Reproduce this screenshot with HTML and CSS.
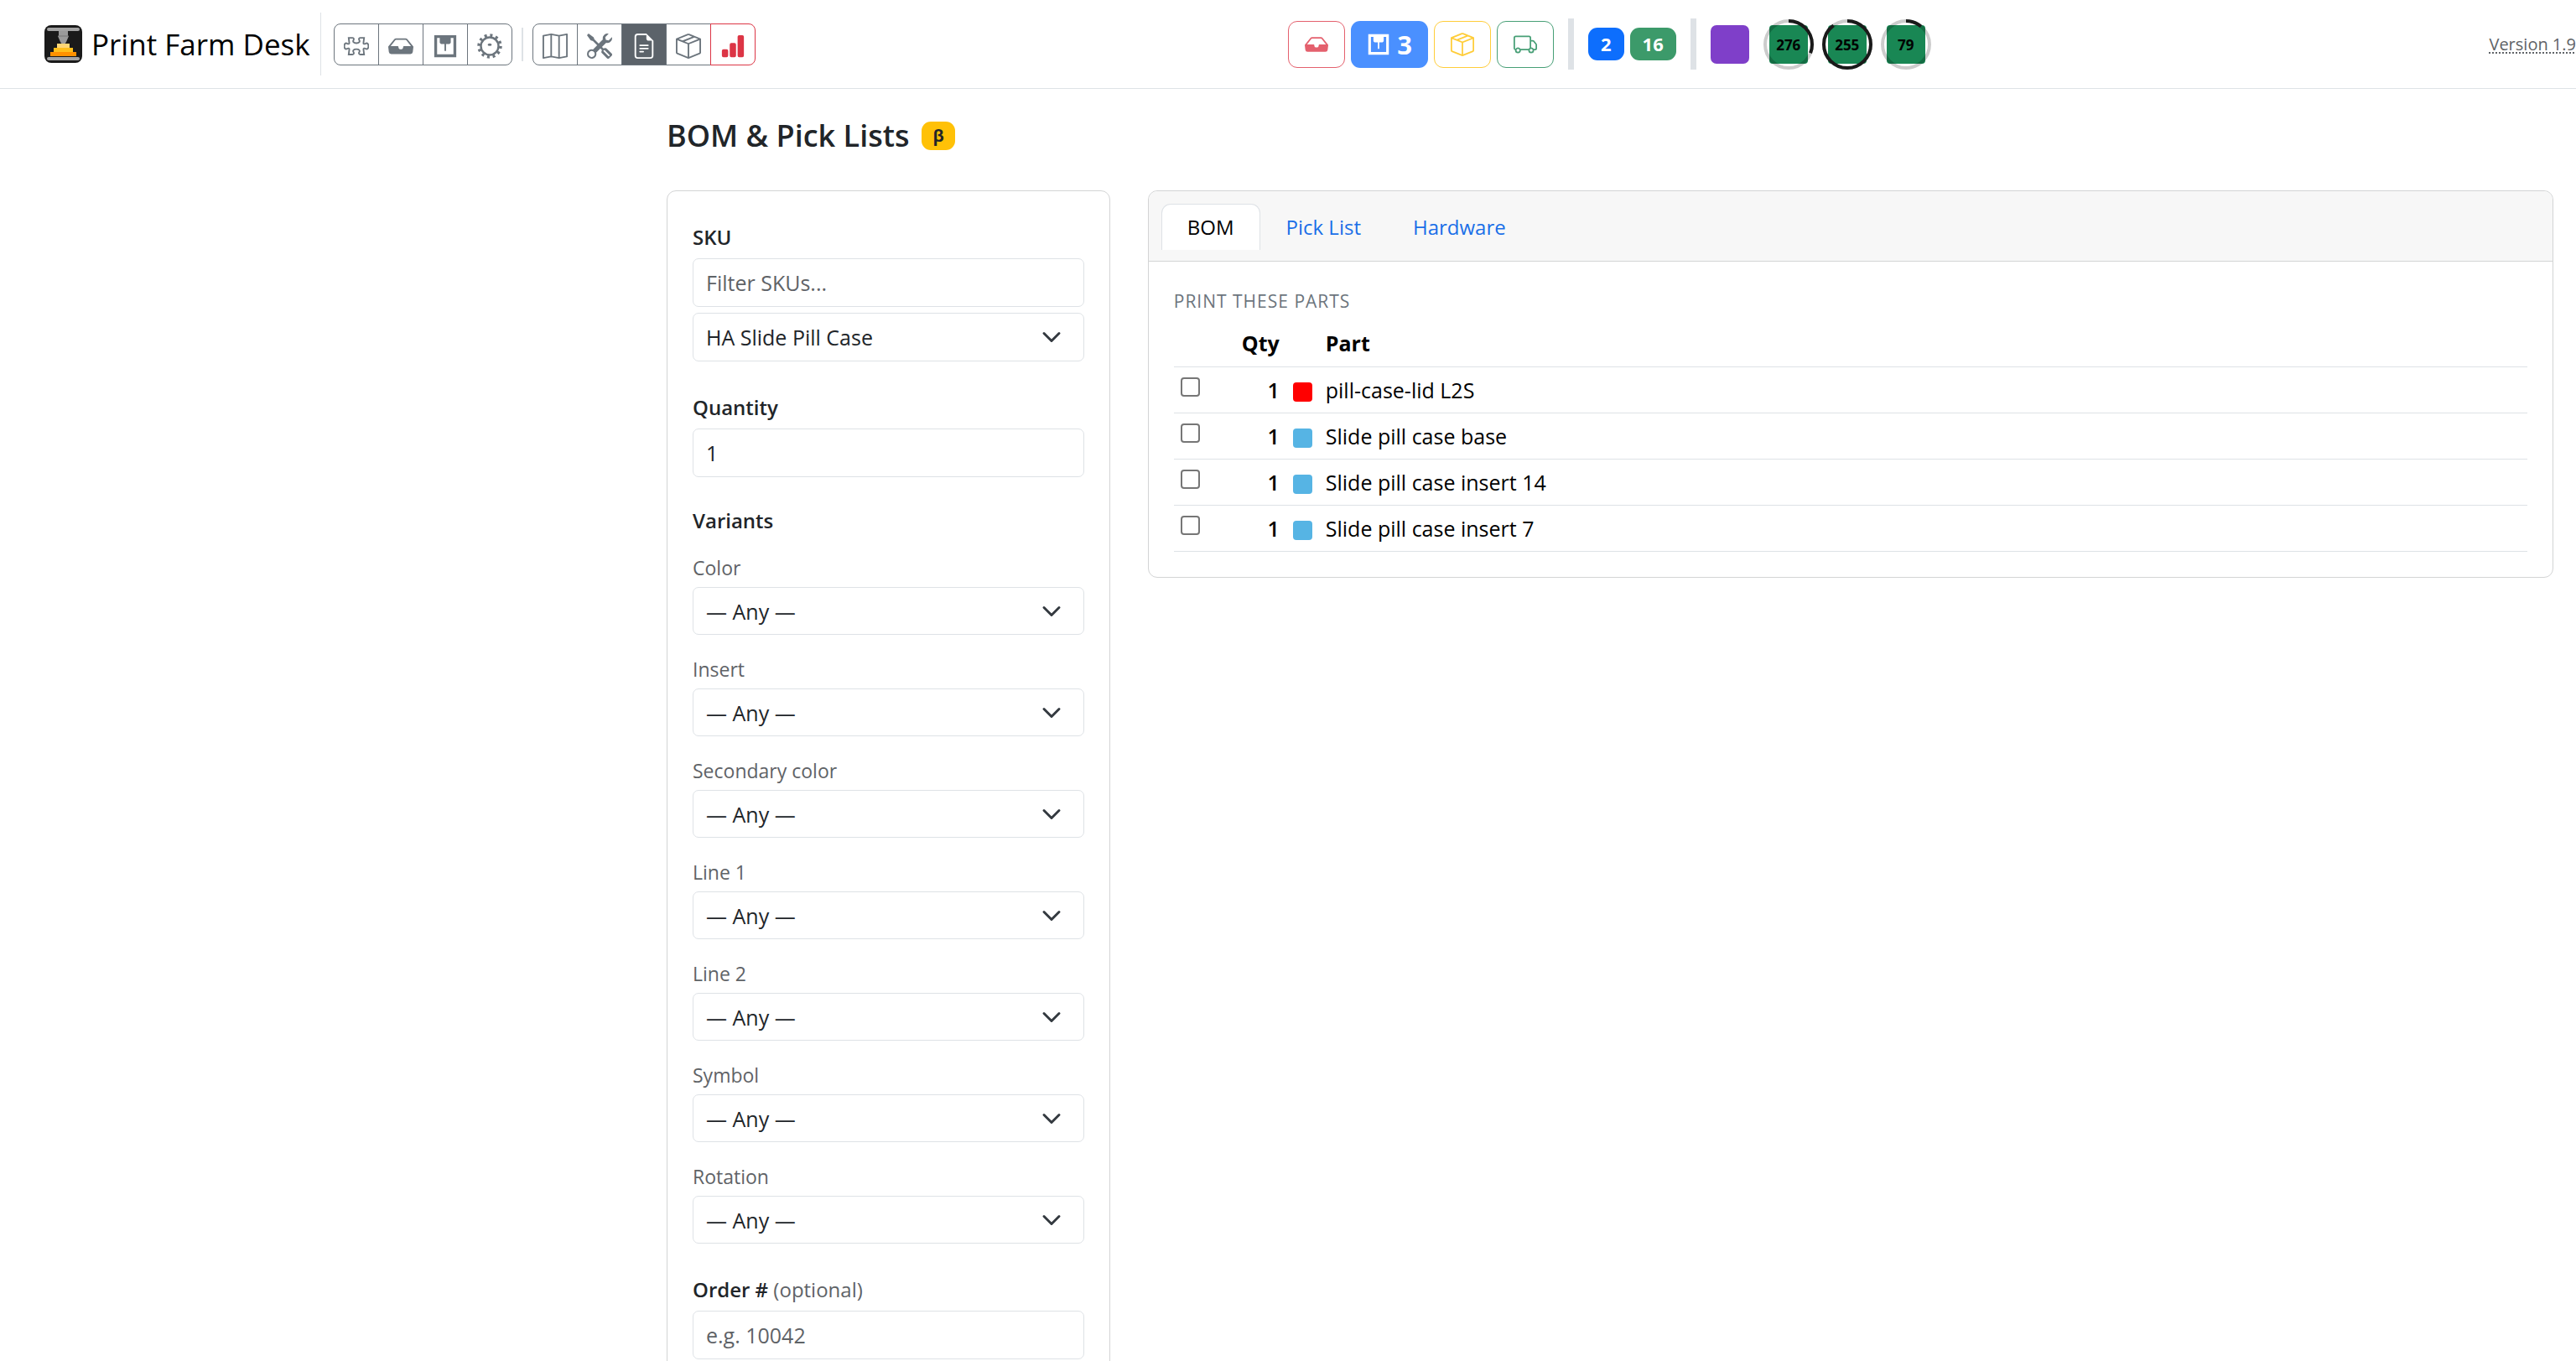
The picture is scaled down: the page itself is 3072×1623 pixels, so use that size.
FILE: index.html
```
<!DOCTYPE html>
<html lang="en">
<head>
  <meta charset="UTF-8">
  <meta name="viewport" content="width=device-width, initial-scale=1.0">
  <title>Print Farm Desk</title>
  <link rel="stylesheet" href="styles.css">
</head>
<body>

  <svg class="sprite" aria-hidden="true">
    <symbol id="i-puzzle" viewBox="0 0 16 16"><path d="M3.1 2.7h2.3c.9 0 1.2.7.8 1.4-.7 1.2.2 2 1.8 2s2.5-.8 1.8-2c-.4-.7-.1-1.4.8-1.4h2.3l-.4 3.2c-.1.7.7.9 1.3.5 1.1-.7 1.900.2 1.900 1.600s-.8 2.300-1.900 1.600c-.6-.4-1.400-.2-1.300.5l.4 3.200h-2.300c-.9 0-1.200-.7-.8-1.400.7-1.200-.2-2-1.800-2s-2.500.8-1.800 2c.4.7.1 1.400-.8 1.400H3.100l.4-3.200c.1-.7-.7-.9-1.300-.5-1.100.7-1.900-.2-1.900-1.600s.8-2.300 1.900-1.600c.6.4 1.400.2 1.300-.5z" fill="none" stroke="currentColor"/></symbol>
    <symbol id="i-inbox" viewBox="0 0 16 16"><path fill="currentColor" d="M4.98 4a.5.5 0 0 0-.39.188L1.54 8H6a.5.5 0 0 1 .5.5 1.5 1.5 0 1 0 3 0A.5.5 0 0 1 10 8h4.46l-3.05-3.812A.5.5 0 0 0 11.02 4zm-1.17-.437A1.5 1.5 0 0 1 4.98 3h6.04a1.5 1.5 0 0 1 1.17.563l3.7 4.625a.5.5 0 0 1 .106.374l-.39 3.124A1.5 1.5 0 0 1 14.117 13H1.883a1.5 1.5 0 0 1-1.489-1.314l-.39-3.124a.5.5 0 0 1 .106-.374z"/></symbol>
    <symbol id="i-printer" viewBox="0 0 16 16"><path fill="currentColor" fill-rule="evenodd" d="M1 1h14v14H1zM2.8 2.8v10.4h10.4V2.8h-1.7v3L10.7 6.600H8.500v4.400h-1V6.600H5.300l-.8-.8v-3z"/></symbol>
    <symbol id="i-gear" viewBox="0 0 16 16"><circle cx="8" cy="8" r="5.6" fill="none" stroke="currentColor" stroke-width="1.3"/><circle cx="8" cy="8" r="6.9" fill="none" stroke="currentColor" stroke-width="1.9" stroke-dasharray="1.6 2.013"/><ellipse cx="8" cy="7" rx="1.3" ry=".8" fill="currentColor"/></symbol>
    <symbol id="i-map" viewBox="0 0 16 16"><path d="M.5 1.4 5.5.5l5 .9 5-.9v14.1l-5 .9-5-.9-5 .9zM5.5.5v14.1M10.5 1.4v14.1" fill="none" stroke="currentColor" stroke-linejoin="round"/></symbol>
    <symbol id="i-tools" viewBox="0 0 16 16"><path fill="currentColor" d="M1 0 0 1l2.2 3.081a1 1 0 0 0 .815.419h.07a1 1 0 0 1 .708.293l2.675 2.675-2.617 2.654A3.003 3.003 0 0 0 0 13a3 3 0 1 0 5.878-.851l2.654-2.617.968.968-.305.914a1 1 0 0 0 .242 1.023l3.27 3.27a.997.997 0 0 0 1.414 0l1.586-1.586a.997.997 0 0 0 0-1.414l-3.27-3.27a1 1 0 0 0-1.023-.242L10.5 9.5l-.96-.96 2.68-2.643A3.005 3.005 0 0 0 16 3q0-.405-.102-.777l-2.14 2.141L12 4l-.364-1.757L13.777.102a3 3 0 0 0-3.675 3.68L7.462 6.46 4.793 3.793a1 1 0 0 1-.293-.707v-.071a1 1 0 0 0-.419-.814zm9.646 10.646a.5.5 0 0 1 .708 0l2.914 2.915a.5.5 0 0 1-.707.707l-2.915-2.914a.5.5 0 0 1 0-.708M3 11l.471.242.529.026.287.445.445.287.026.529L5 13l-.242.471-.026.529-.445.287-.287.445-.529.026L3 15l-.471-.242L2 14.732l-.287-.445L1.268 14l-.026-.529L1 13l.242-.471.026-.529.445-.287.287-.445.529-.026z"/></symbol>
    <symbol id="i-file" viewBox="0 0 16 16"><path fill="currentColor" d="M5.5 7a.5.5 0 0 0 0 1h5a.5.5 0 0 0 0-1zM5 9.5a.5.5 0 0 1 .5-.5h5a.5.5 0 0 1 0 1h-5a.5.5 0 0 1-.5-.5m0 2a.5.5 0 0 1 .5-.5h2a.5.5 0 0 1 0 1h-2a.5.5 0 0 1-.5-.5"/><path fill="currentColor" d="M9.5 0H4a2 2 0 0 0-2 2v12a2 2 0 0 0 2 2h8a2 2 0 0 0 2-2V4.5zm0 1v2A1.5 1.5 0 0 0 11 4.5h2V14a1 1 0 0 1-1 1H4a1 1 0 0 1-1-1V2a1 1 0 0 1 1-1z"/></symbol>
    <symbol id="i-box" viewBox="0 0 16 16"><path fill="currentColor" d="M8.186 1.113a.5.5 0 0 0-.372 0L1.846 3.5l2.404.961L10.404 2zm3.564 1.426L5.596 5 8 5.961 14.154 3.5zm3.25 1.7-6.5 2.6v7.922l6.5-2.6V4.24zM7.5 14.762V6.838L1 4.239v7.923zM7.443.184a1.5 1.5 0 0 1 1.114 0l7.129 2.852A.5.5 0 0 1 16 3.5v8.662a1 1 0 0 1-.629.928l-7.185 2.874a.5.5 0 0 1-.372 0L.63 13.09a1 1 0 0 1-.63-.928V3.5a.5.5 0 0 1 .314-.464z"/></symbol>
    <symbol id="i-chart" viewBox="0 0 16 16"><path fill="currentColor" d="M1 11a1 1 0 0 1 1-1h2a1 1 0 0 1 1 1v3a1 1 0 0 1-1 1H2a1 1 0 0 1-1-1zm5-4a1 1 0 0 1 1-1h2a1 1 0 0 1 1 1v7a1 1 0 0 1-1 1H7a1 1 0 0 1-1-1zm5-5a1 1 0 0 1 1-1h2a1 1 0 0 1 1 1v12a1 1 0 0 1-1 1h-2a1 1 0 0 1-1-1z"/></symbol>
    <symbol id="i-truck" viewBox="0 0 16 16"><path fill="currentColor" d="M0 3.5A1.5 1.5 0 0 1 1.5 2h9A1.5 1.5 0 0 1 12 3.5V5h1.02a1.5 1.5 0 0 1 1.17.563l1.481 1.85a1.5 1.5 0 0 1 .329.938V10.5a1.5 1.5 0 0 1-1.5 1.5H14a2 2 0 1 1-4 0H5a2 2 0 1 1-3.998-.085A1.5 1.5 0 0 1 0 10.5zm1.294 7.456A2 2 0 0 1 4.732 11h5.536a2 2 0 0 1 .732-.732V3.5a.5.5 0 0 0-.5-.5h-9a.5.5 0 0 0-.5.5v7a.5.5 0 0 0 .294.456M12 10a2 2 0 0 1 1.732 1h.768a.5.5 0 0 0 .5-.5V8.35a.5.5 0 0 0-.11-.312l-1.48-1.85A.5.5 0 0 0 13.02 6H12zm-9 1a1 1 0 1 0 0 2 1 1 0 0 0 0-2m9 0a1 1 0 1 0 0 2 1 1 0 0 0 0-2"/></symbol>
    <symbol id="i-chevron" viewBox="0 0 16 16"><path d="m2 5 6 6 6-6" fill="none" stroke="#343a40" stroke-width="2" stroke-linecap="round" stroke-linejoin="round"/></symbol>
  </svg>

  <header class="navbar">
    <div class="nav-left">
      <a class="brand" href="#">
        <svg class="logo" viewBox="0 0 45 45" aria-hidden="true">
          <rect width="45" height="45" rx="8" fill="#1a1a1a"/>
          <rect x="3" y="3" width="39" height="4" rx="2" fill="#a3a3a3"/>
          <path d="M17 7h11v6h1l-3 7-2 3h-3l-2-3-3-7h1z" fill="#9a9a9a"/>
          <path d="M16 13h13" stroke="#777"/>
          <rect x="15" y="22" width="15" height="5" fill="#ffd676"/>
          <rect x="11" y="27" width="23" height="5" fill="#ffbf1c"/>
          <rect x="7" y="32" width="31" height="5" fill="#ff9100"/>
          <rect x="3" y="38" width="39" height="4" rx="2" fill="#a3a3a3"/>
        </svg>
        Print Farm Desk
      </a>
      <div class="brand-line"></div>
      <nav class="btn-group">
        <button class="btn" aria-label="Parts"><svg><use href="#i-puzzle"/></svg></button>
        <button class="btn" aria-label="Inbox"><svg><use href="#i-inbox"/></svg></button>
        <button class="btn" aria-label="Printers"><svg><use href="#i-printer"/></svg></button>
        <button class="btn" aria-label="Settings"><svg><use href="#i-gear"/></svg></button>
      </nav>
      <div class="group-line"></div>
      <nav class="btn-group">
        <button class="btn" aria-label="Map"><svg><use href="#i-map"/></svg></button>
        <button class="btn" aria-label="Tools"><svg><use href="#i-tools"/></svg></button>
        <button class="btn active" aria-label="BOM"><svg><use href="#i-file"/></svg></button>
        <button class="btn" aria-label="Stock"><svg><use href="#i-box"/></svg></button>
        <button class="btn danger" aria-label="Stats"><svg><use href="#i-chart"/></svg></button>
      </nav>
    </div>

    <div class="nav-right">
      <div class="status">
        <div class="queue">
          <button class="stage red" aria-label="Incoming"><svg><use href="#i-inbox"/></svg></button>
          <button class="stage blue" aria-label="Printing"><svg><use href="#i-printer"/></svg>3</button>
          <button class="stage yellow" aria-label="Packing"><svg><use href="#i-box"/></svg></button>
          <button class="stage green" aria-label="Shipping"><svg><use href="#i-truck"/></svg></button>
        </div>
        <div class="bar"></div>
        <div class="counts">
          <span class="count blue">2</span>
          <span class="count green">16</span>
        </div>
        <div class="bar"></div>
        <div class="printers">
          <span class="printer idle"></span>
          <span class="printer">276
            <svg class="ring" viewBox="0 0 60 60"><circle cx="30" cy="30" r="28"/><circle class="done" cx="30" cy="30" r="28" pathLength="100" stroke-dasharray="31 100"/></svg>
          </span>
          <span class="printer">255
            <svg class="ring" viewBox="0 0 60 60"><circle cx="30" cy="30" r="28"/><circle class="done" cx="30" cy="30" r="28" pathLength="100" stroke-dasharray="90 100"/></svg>
          </span>
          <span class="printer">79
            <svg class="ring" viewBox="0 0 60 60"><circle cx="30" cy="30" r="28"/><circle class="done" cx="30" cy="30" r="28" pathLength="100" stroke-dasharray="11 100"/></svg>
          </span>
        </div>
      </div>
      <a class="version" href="#">Version 1.9</a>
    </div>
  </header>

  <main class="container">
    <h1>BOM &amp; Pick Lists <span class="beta">β</span></h1>

    <div class="row">
      <form class="card filters">
        <div class="group">
          <label class="title" for="sku">SKU</label>
          <input type="text" placeholder="Filter SKUs..." aria-label="Filter SKUs">
          <div class="select">
            <select id="sku"><option>HA Slide Pill Case</option></select>
            <svg><use href="#i-chevron"/></svg>
          </div>
        </div>

        <div class="group">
          <label class="title" for="qty">Quantity</label>
          <input type="text" inputmode="numeric" id="qty" value="1">
        </div>

        <div class="variants">
          <h2 class="title">Variants</h2>
          <div class="variant">
            <label for="color">Color</label>
            <div class="select"><select id="color"><option>— Any —</option></select><svg><use href="#i-chevron"/></svg></div>
          </div>
          <div class="variant">
            <label for="insert">Insert</label>
            <div class="select"><select id="insert"><option>— Any —</option></select><svg><use href="#i-chevron"/></svg></div>
          </div>
          <div class="variant">
            <label for="color2">Secondary color</label>
            <div class="select"><select id="color2"><option>— Any —</option></select><svg><use href="#i-chevron"/></svg></div>
          </div>
          <div class="variant">
            <label for="line1">Line 1</label>
            <div class="select"><select id="line1"><option>— Any —</option></select><svg><use href="#i-chevron"/></svg></div>
          </div>
          <div class="variant">
            <label for="line2">Line 2</label>
            <div class="select"><select id="line2"><option>— Any —</option></select><svg><use href="#i-chevron"/></svg></div>
          </div>
          <div class="variant">
            <label for="symbol">Symbol</label>
            <div class="select"><select id="symbol"><option>— Any —</option></select><svg><use href="#i-chevron"/></svg></div>
          </div>
          <div class="variant">
            <label for="rotation">Rotation</label>
            <div class="select"><select id="rotation"><option>— Any —</option></select><svg><use href="#i-chevron"/></svg></div>
          </div>
        </div>

        <div class="group">
          <label class="title" for="order">Order # <span>(optional)</span></label>
          <input type="text" id="order" placeholder="e.g. 10042">
        </div>
      </form>

      <section class="card results">
        <div class="tabs">
          <a class="tab active" href="#">BOM</a>
          <a class="tab" href="#">Pick List</a>
          <a class="tab" href="#">Hardware</a>
        </div>
        <div class="card-body">
          <h3>Print these parts</h3>
          <table>
            <thead>
              <tr><th class="check"></th><th class="qty">Qty</th><th class="swatch"></th><th>Part</th></tr>
            </thead>
            <tbody>
              <tr>
                <td class="check"><input type="checkbox" id="p1"></td>
                <td class="qty">1</td>
                <td class="swatch"><span class="red"></span></td>
                <td><label for="p1">pill-case-lid L2S</label></td>
              </tr>
              <tr>
                <td class="check"><input type="checkbox" id="p2"></td>
                <td class="qty">1</td>
                <td class="swatch"><span></span></td>
                <td><label for="p2">Slide pill case base</label></td>
              </tr>
              <tr>
                <td class="check"><input type="checkbox" id="p3"></td>
                <td class="qty">1</td>
                <td class="swatch"><span></span></td>
                <td><label for="p3">Slide pill case insert 14</label></td>
              </tr>
              <tr>
                <td class="check"><input type="checkbox" id="p4"></td>
                <td class="qty">1</td>
                <td class="swatch"><span></span></td>
                <td><label for="p4">Slide pill case insert 7</label></td>
              </tr>
            </tbody>
          </table>
        </div>
      </section>
    </div>
  </main>

</body>
</html>
```
FILE: styles.css
```
:root {
  --text: #212529;
  --muted: #6c757d;
  --label: #5f6367;
  --line: #dee2e6;
  --card-line: #d3d4d5;
  --blue: #0d6efd;
  --green: #198754;
  --red: #dc3545;
  --yellow: #ffc107;
}

* {
  box-sizing: border-box;
}

body {
  margin: 0;
  height: 100vh;
  overflow: hidden;
  font-family: "Open Sans", "Noto Sans", sans-serif;
  font-size: 25px;
  line-height: 40px;
  color: var(--text);
  background: #fff;
}

button,
input,
select {
  font: inherit;
  color: inherit;
}

.sprite {
  display: none;
}

/* Navbar */
.navbar {
  display: grid;
  grid-template-columns: 1fr 1fr;
  height: 106px;
  border-bottom: 1px solid var(--line);
}

.nav-left {
  display: flex;
  align-items: center;
  padding-left: 53px;
}

.brand {
  display: flex;
  align-items: center;
  gap: 11px;
  margin-right: 12px;
  font-size: 35px;
  color: #000;
  text-decoration: none;
  white-space: nowrap;
}

.logo {
  width: 45px;
  height: 45px;
}

.brand-line {
  width: 1px;
  height: 75px;
  margin-right: 15px;
  background: var(--line);
}

.group-line {
  width: 2px;
  height: 40px;
  margin: 0 11px;
  background: var(--line);
}

.btn-group {
  display: flex;
}

.btn {
  display: flex;
  align-items: center;
  justify-content: center;
  width: 54px;
  height: 50px;
  margin-left: -1px;
  padding: 4px 0 0;
  border: 1px solid var(--muted);
  background: #fff;
  color: var(--muted);
  cursor: pointer;
}

.btn:first-child {
  margin-left: 0;
  border-radius: 8px 0 0 8px;
}

.btn:last-child {
  border-radius: 0 8px 8px 0;
}

.btn.active {
  background: #5c636a;
  color: #fff;
}

.btn.danger {
  border-color: var(--red);
  color: var(--red);
}

.btn svg {
  width: 30px;
  height: 30px;
}

.nav-right {
  display: flex;
  align-items: center;
  justify-content: space-between;
  overflow: hidden;
}

.status,
.queue,
.counts,
.printers {
  display: flex;
  align-items: center;
}

.queue {
  gap: 7px;
}

.stage {
  display: flex;
  align-items: center;
  justify-content: center;
  gap: 8px;
  width: 68px;
  height: 56px;
  padding: 0;
  border: 1px solid;
  border-radius: 11px;
  background: #fff;
  cursor: pointer;
}

.stage svg {
  width: 28px;
  height: 28px;
}

.stage.red {
  color: #e4606d;
}

.stage.blue {
  width: 92px;
  border: 0;
  background: #4a90ff;
  color: #fff;
  font-size: 31px;
  font-weight: 700;
}

.stage.yellow {
  color: #ffcd39;
}

.stage.green {
  color: #479f76;
}

.bar {
  width: 7px;
  height: 61px;
  margin: 0 17px;
  background: var(--line);
}

.counts {
  gap: 7px;
}

.count {
  padding: 0 15px;
  border-radius: 11px;
  background: var(--blue);
  color: #fff;
  font-size: 22px;
  font-weight: 700;
  line-height: 39px;
}

.count.green {
  background: #3c9a6a;
}

.printers {
  gap: 24px;
}

.printer {
  position: relative;
  width: 46px;
  height: 46px;
  border-radius: 4px;
  background: var(--green);
  color: #000;
  font-size: 17px;
  font-weight: 700;
  line-height: 48px;
  text-align: center;
}

.printer.idle {
  border-radius: 7px;
  background: #7f3fc9;
}

.ring {
  position: absolute;
  inset: -7px;
  width: 60px;
  height: 60px;
  transform: rotate(-90deg);
}

.ring circle {
  fill: none;
  stroke: rgba(0, 0, 0, 0.2);
  stroke-width: 4;
}

.ring .done {
  stroke: #1a1a1a;
}

.version {
  color: var(--label);
  font-size: 20px;
  text-decoration: underline dotted 2px;
  text-underline-offset: 3px;
  white-space: nowrap;
}

/* Page */
.container {
  max-width: 2250px;
  margin: 0 27px 0 auto;
  padding-top: 32px;
}

h1 {
  display: flex;
  align-items: center;
  gap: 15px;
  margin: 0 0 41px;
  font-size: 36px;
  font-weight: 600;
  line-height: 48px;
}

.beta {
  padding: 0 13px;
  border-radius: 11px;
  background: var(--yellow);
  font-size: 20px;
  font-weight: 700;
  line-height: 34px;
}

.row {
  display: grid;
  grid-template-columns: repeat(12, 1fr);
  gap: 45px;
  align-items: start;
}

.card {
  border: 1px solid var(--card-line);
  border-radius: 11px;
  background: #fff;
}

/* Filters */
.filters {
  grid-column: span 3;
  padding: 30px;
}

.group {
  margin-bottom: 30px;
}

.title {
  display: block;
  margin: 0;
  font-size: 24px;
  font-weight: 600;
  line-height: 50px;
}

.title span {
  color: var(--label);
  font-weight: 400;
}

input[type="text"],
select {
  display: block;
  width: 100%;
  height: 58px;
  padding: 0 15px;
  border: 1px solid var(--line);
  border-radius: 7px;
  background: #fff;
  appearance: none;
}

input::placeholder {
  color: var(--label);
  opacity: 1;
}

.select {
  position: relative;
}

input + .select {
  margin-top: 7px;
}

.select svg {
  position: absolute;
  top: 17px;
  right: 27px;
  width: 24px;
  height: 24px;
  pointer-events: none;
}

.variants {
  padding-bottom: 8px;
}

.variants .title {
  padding-bottom: 16px;
  line-height: 43px;
}

.variant {
  margin-bottom: 22px;
}

.variant label {
  display: block;
  padding-bottom: 4px;
  color: var(--label);
  font-size: 23px;
  line-height: 38px;
}

.variant select {
  height: 57px;
}

/* Results */
.results {
  grid-column: span 9;
}

.tabs {
  display: flex;
  padding: 15px 15px 13px;
  border-bottom: 1px solid var(--card-line);
  border-radius: 11px 11px 0 0;
  background: #f7f7f7;
}

.tab {
  padding: 0 30px;
  border: 1px solid transparent;
  border-bottom: 0;
  border-radius: 11px 11px 0 0;
  color: #1a6fe8;
  font-size: 24px;
  line-height: 54px;
  text-decoration: none;
}

.tab.active {
  border-color: var(--line);
  background: #fff;
  color: #000;
}

.card-body {
  padding: 30px;
}

h3 {
  margin: 0 0 6px;
  color: var(--muted);
  font-size: 21px;
  font-weight: 500;
  letter-spacing: 1px;
  line-height: 34px;
  text-transform: uppercase;
}

table {
  width: 100%;
  border-collapse: collapse;
  color: #000;
}

th,
td {
  height: 55px;
  padding: 0 8px;
  border-bottom: 1px solid var(--line);
  text-align: left;
}

th {
  font-weight: 700;
}

.check {
  width: 63px;
}

.qty {
  width: 71px;
  font-weight: 600;
  text-align: right;
}

th.qty {
  font-weight: 700;
}

.swatch {
  width: 37px;
}

.swatch span {
  display: block;
  width: 23px;
  height: 23px;
  margin-top: 6px;
  border-radius: 4px;
  background: #56b4e4;
}

.swatch .red {
  background: #f00;
}

input[type="checkbox"] {
  display: block;
  width: 23px;
  height: 23px;
  margin: 0 0 6px;
  border: 2px solid #767676;
  border-radius: 4px;
  background: #fff;
  appearance: none;
}

input[type="checkbox"]:checked {
  background: var(--blue);
}
```
